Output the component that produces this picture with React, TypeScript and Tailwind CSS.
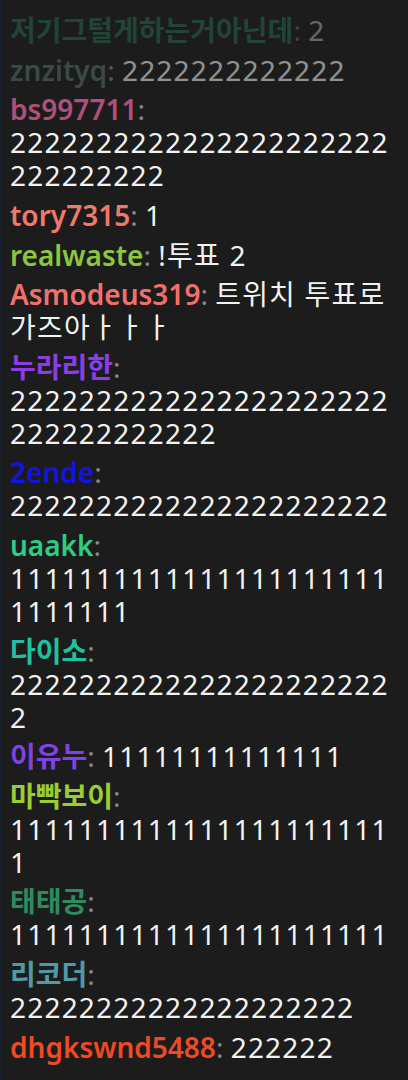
import React from "react";

type Msg = {
  name: string;
  color: string;
  text: string;
  fade?: string;
};

const MESSAGES: Msg[] = [
  { name: "저기그털게하는거아닌데", color: "text-[#2f8f6a]", text: "2", fade: "opacity-35" },
  { name: "znzityq", color: "text-[#55706a]", text: "2222222222222", fade: "opacity-55" },
  { name: "bs997711", color: "text-[#b0507a]", text: "2222222222222222222222222222222" },
  { name: "tory7315", color: "text-[#f07a6a]", text: "1" },
  { name: "realwaste", color: "text-[#8cc63f]", text: "!투표 2" },
  { name: "Asmodeus319", color: "text-[#f2706c]", text: "트위치 투표로 가즈아ㅏㅏㅏ" },
  { name: "누라리한", color: "text-[#8a3ee6]", text: "2222222222222222222222222222222222" },
  { name: "2ende", color: "text-[#1414e0]", text: "2222222222222222222222" },
  { name: "uaakk", color: "text-[#2ecc85]", text: "11111111111111111111111111111" },
  { name: "다이소", color: "text-[#22c0a0]", text: "22222222222222222222222" },
  { name: "이유누", color: "text-[#7f42e8]", text: "11111111111111" },
  { name: "마빡보이", color: "text-[#9acd32]", text: "11111111111111111111111" },
  { name: "태태공", color: "text-[#2e8b60]", text: "1111111111111111111111" },
  { name: "리코더", color: "text-[#4f9aa6]", text: "22222222222222222222" },
  { name: "dhgkswnd5488", color: "text-[#f04a22]", text: "222222" },
];

// spans get line-height 0 so the Korean fallback font can't stretch a line box
function ChatLine({ msg }: { msg: Msg }) {
  return (
    <div className={`py-[3.3px] break-keep [overflow-wrap:anywhere] ${msg.fade ?? ""}`}>
      <span className={`leading-[0px] font-semibold ${msg.color}`}>{msg.name}</span>
      <span className="leading-[0px] text-[#8a8a8a]">: </span>
      <span className="leading-[0px] tracking-[1.2px] text-[#f2f2f2]">{msg.text}</span>
    </div>
  );
}

export default function App() {
  return (
    <div className="w-[408px] h-[1080px] overflow-hidden bg-[#1b1c1b] border-l-2 border-[#182230]">
      <div
        className="flex flex-col pl-[8px] pr-[16px] pt-[11px] text-[28px] leading-[33px]"
        style={{ fontFamily: '"Noto Sans", "Noto Sans CJK KR", sans-serif' }}
      >
        {MESSAGES.map((m) => (
          <ChatLine key={m.name} msg={m} />
        ))}
      </div>
    </div>
  );
}
